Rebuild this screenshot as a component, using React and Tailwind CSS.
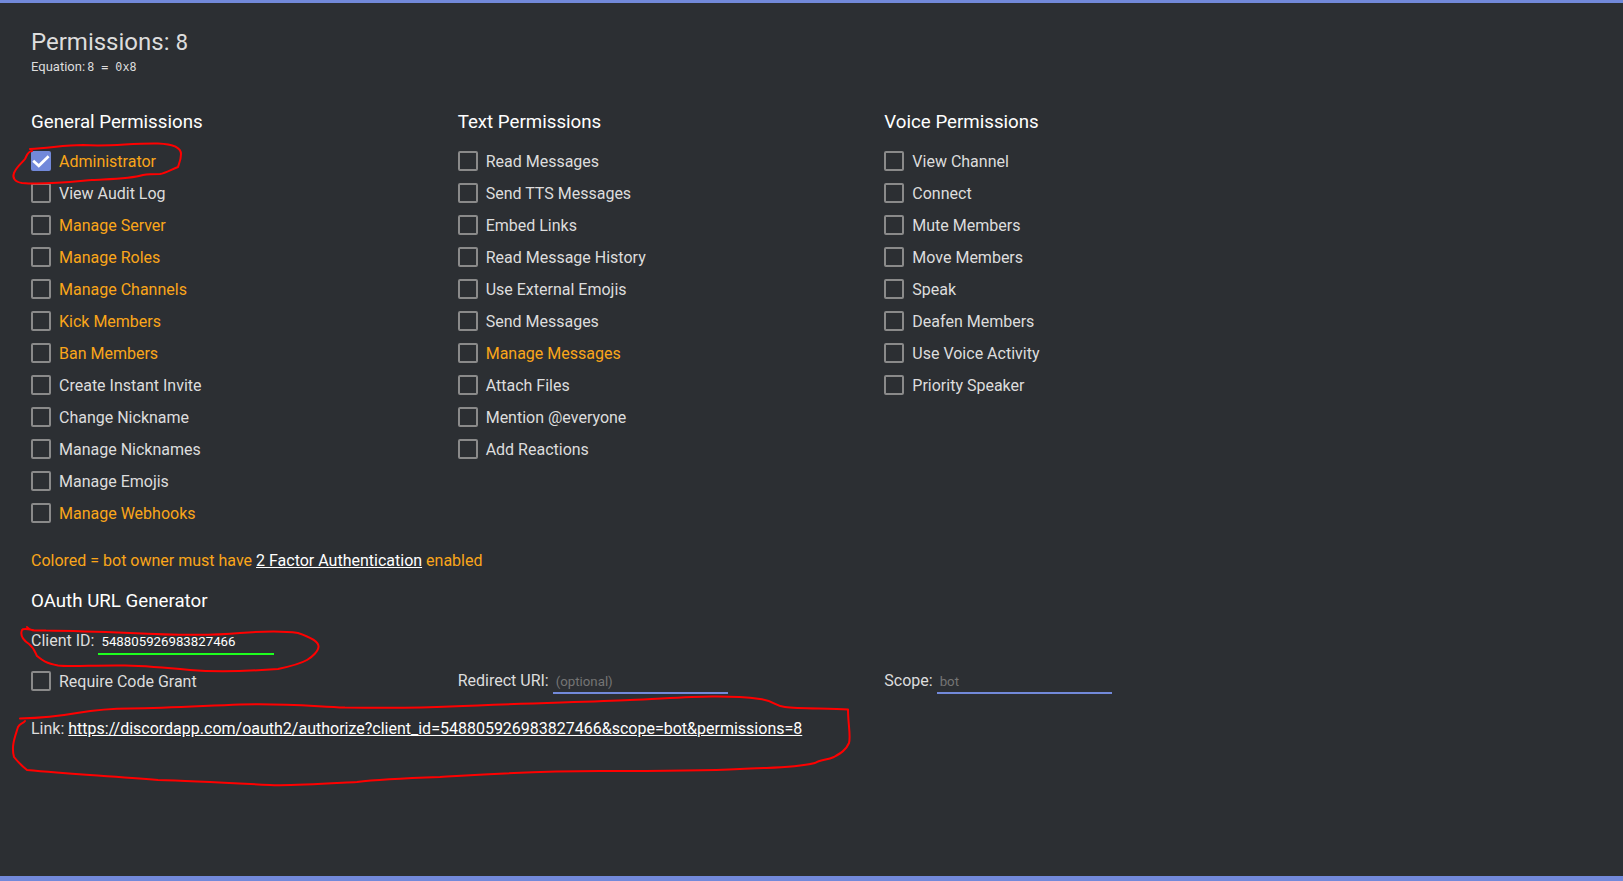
const general = [
  { label: "Administrator", colored: true, checked: true },
  { label: "View Audit Log" },
  { label: "Manage Server", colored: true },
  { label: "Manage Roles", colored: true },
  { label: "Manage Channels", colored: true },
  { label: "Kick Members", colored: true },
  { label: "Ban Members", colored: true },
  { label: "Create Instant Invite" },
  { label: "Change Nickname" },
  { label: "Manage Nicknames" },
  { label: "Manage Emojis" },
  { label: "Manage Webhooks", colored: true },
];

const text = [
  { label: "Read Messages" },
  { label: "Send TTS Messages" },
  { label: "Embed Links" },
  { label: "Read Message History" },
  { label: "Use External Emojis" },
  { label: "Send Messages" },
  { label: "Manage Messages", colored: true },
  { label: "Attach Files" },
  { label: "Mention @everyone" },
  { label: "Add Reactions" },
];

const voice = [
  { label: "View Channel" },
  { label: "Connect" },
  { label: "Mute Members" },
  { label: "Move Members" },
  { label: "Speak" },
  { label: "Deafen Members" },
  { label: "Use Voice Activity" },
  { label: "Priority Speaker" },
];

const Checkbox = ({ label, colored, checked }) => (
  <label className="flex h-8 items-center gap-2 leading-5">
    {checked ? (
      <span className="size-5 rounded-[2px] bg-[#7289da]">
        <svg viewBox="0 0 20 20" className="size-5" fill="none">
          <path d="M2.2 9.7 L7.8 14.8 L17.6 5.2" stroke="#fff" strokeWidth="2.7" />
        </svg>
      </span>
    ) : (
      <span className="size-5 rounded-[2px] border-2 border-[#8a8a8a]" />
    )}
    <span className={colored ? "pt-0.5 text-[#faa61a]" : "pt-0.5"}>
      {label}
    </span>
  </label>
);

const Column = ({ title, items }) => (
  <div>
    <h3 className="mb-[11px] text-[18.72px] leading-6 text-white">{title}</h3>
    {items.map((item) => (
      <Checkbox key={item.label} {...item} />
    ))}
  </div>
);

const Field = ({ label, line = "border-[#7289da]", ...rest }) => (
  <label className="flex items-baseline gap-1 leading-6">
    {label}
    <input
      className={`h-6 w-[175.5px] border-b-2 bg-transparent px-[3px] text-[13.25px] leading-5 text-white outline-none placeholder:text-[#757575] ${line}`}
      {...rest}
    />
  </label>
);

// red pen strokes drawn over the page
const Marks = () => (
  <svg
    className="pointer-events-none absolute -top-[3px] left-0"
    width="1623"
    height="881"
    fill="none"
    stroke="#f00"
    strokeWidth="2"
    strokeLinecap="round"
    strokeLinejoin="round"
  >
    <path d="M30 149 C50 148 65 145 83 145 C110 147 130 143 158 143.500 C170 144 181 146 181 154 C181 160 179 164 178 167 C172 169 166 173 160 174 C154 174 149 174 143 175 C130 179 110 179 92 180 C70 182 45 185 22 183 C15 182 12 178 14 173 C17 166 22 163 25 159 C27 155 28 151 32 151" />
    <path d="M27 627 C31 632 38 630 46 630.500 C80 631 105 632 130 633 C170 635 210 636 240 633 C265 631 285 631 298 633 C307 636 318 641 318.500 646 C319 651 312 657 307 660 C300 664 292 666 278 669 C250 671 215 672 190 670 C170 668 150 666 125 665.500 C95 665 70 667 58 665.500 C45 663 42 660 37 656 C35 652 34 648 29 644 C23 640 20 635 22 630 C23 628 28 629 33 630" />
    <path d="M20 718.500 C40 718 60 716 77 713 C95 710 110 708.500 130 708.500 C170 708 200 706 240 704.500 C280 703 310 706 345 707.500 C390 708 420 708 450 706.500 C530 703 590 702 630 700 C680 698 720 694 760 699 C775 701 775 706 785 707 C800 709 830 708 848 709.500 C848 724 851 736 849 743 C846 750 841 753 834 757 C827 760 820 760 815 763 C790 769 770 767 740 769 C700 771 650 771 600 771 C530 771 490 774 440 777 C410 778 380 779 357 782 C320 784 290 786 270 785 C230 783 190 781 158 780 C110 776 70 774 27 770 C22 766 18 762 14 757 C11 746 15 737 18 727 C20 723 23 724 25 721" />
  </svg>
);

export default function App() {
  return (
    <div className="relative flex h-[881px] flex-col overflow-hidden border-t-[3px] border-b-[5px] border-[#7289da] bg-[#2c2f33] pt-6 pl-[31px] font-[Roboto,sans-serif] text-base text-[#dddddd]">
      <h1 className="text-2xl leading-[30px]">
        Permissions:{" "}
        <span className="font-['DejaVu_Sans_Mono',monospace] text-[21px] leading-none">
          8
        </span>
      </h1>
      <p className="text-[13px] leading-5">
        Equation:{" "}
        <span className="-ml-px font-['DejaVu_Sans_Mono',monospace] text-[11.67px] leading-none">
          8 = 0x8
        </span>
      </p>

      <div className="mt-[33px] grid w-[1280px] grid-cols-3">
        <Column title="General Permissions" items={general} />
        <Column title="Text Permissions" items={text} />
        <Column title="Voice Permissions" items={voice} />
      </div>

      <p className="mt-5 leading-6 text-[#faa61a]">
        Colored = bot owner must have{" "}
        <a className="text-white underline">2 Factor Authentication</a> enabled
      </p>

      <h3 className="mt-4 text-[18.72px] leading-6 text-white">
        OAuth URL Generator
      </h3>
      <div className="mt-4 h-9">
        <Field
          label="Client ID:"
          line="border-[#1eff1e]"
          defaultValue="548805926983827466"
        />
      </div>
      <div className="grid h-8 w-[1280px] grid-cols-3">
        <Checkbox label="Require Code Grant" />
        <div className="pt-[3.5px]">
          <Field label="Redirect URI:" placeholder="(optional)" />
        </div>
        <div className="pt-[3.5px]">
          <Field label="Scope:" placeholder="bot" />
        </div>
      </div>
      <p className="mt-5 leading-6">
        Link:{" "}
        <a className="text-white underline">
          https://discordapp.com/oauth2/authorize?client_id=548805926983827466&scope=bot&permissions=8
        </a>
      </p>
      <Marks />
    </div>
  );
}
